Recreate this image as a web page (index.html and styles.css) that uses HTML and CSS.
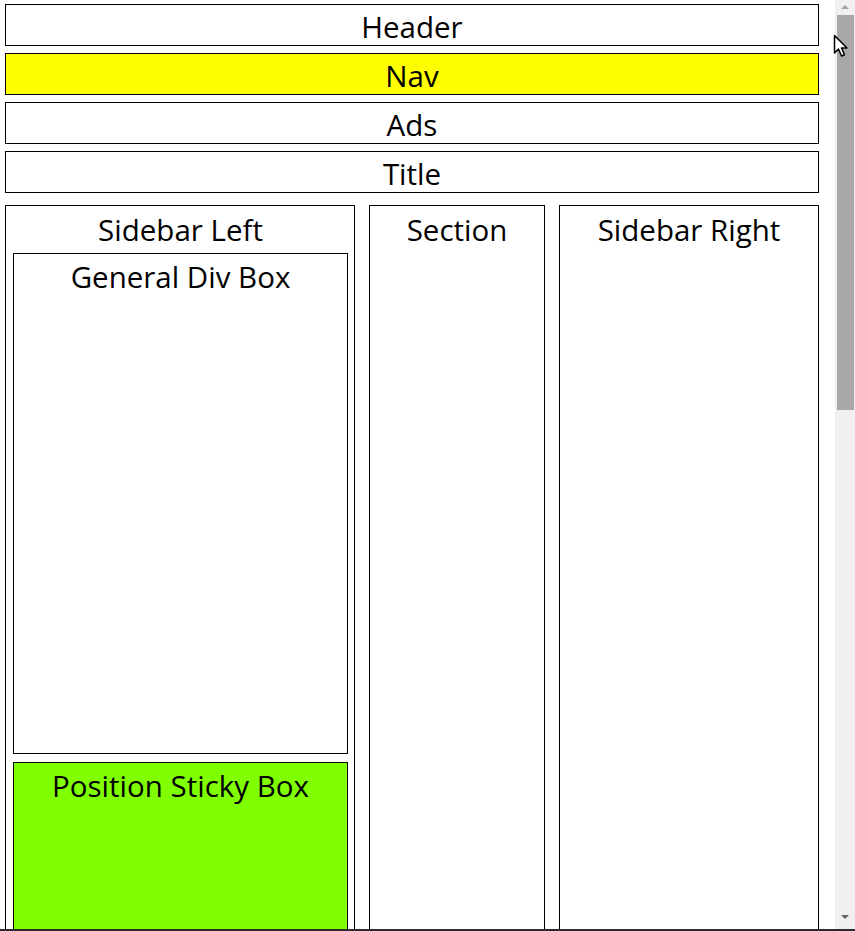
FILE: index.html
```html
<!DOCTYPE html>
<html lang="en">
<head>
    <meta charset="UTF-8">
    <meta name="viewport" content="width=device-width, initial-scale=1.0">
    <title>Position Sticky</title>
    <link rel="stylesheet" href="styles.css">
</head>
<body>
    <div class="window">
        <div class="page">
            <header class="box">Header</header>
            <nav class="box nav">Nav</nav>
            <div class="box">Ads</div>
            <div class="box">Title</div>

            <div class="main">
                <aside class="col sidebar-left">
                    <div class="label">Sidebar Left</div>
                    <div class="general">General Div Box</div>
                    <div class="sticky">Position Sticky Box</div>
                </aside>
                <section class="col">
                    <div class="label">Section</div>
                </section>
                <aside class="col">
                    <div class="label">Sidebar Right</div>
                </aside>
            </div>
        </div>

        <!-- browser scrollbar -->
        <div class="scrollbar">
            <span class="arrow up"></span>
            <div class="thumb"></div>
            <span class="arrow down"></span>
        </div>

        <svg class="cursor" width="16" height="24" viewBox="0 0 16 24">
            <path d="M1.5 1.5 L1.5 19 L5.5 15 L8.5 22 L11.5 20.8 L8.5 14 L14 14 Z" fill="#fff" stroke="#000" stroke-width="1.5" stroke-linejoin="round"/>
        </svg>
    </div>
    <div class="taskbar"></div>
</body>
</html>
```
FILE: styles.css
```css
html, body {
    margin: 0;
    padding: 0;
}

body {
    height: 931px;
    overflow: hidden;
    display: flex;
    flex-direction: column;
    background: white;
    font-family: "Open Sans", "Noto Sans", sans-serif;
    color: black;
}

.window {
    position: relative;
    flex: 1;
    display: flex;
    overflow: hidden;
}

.page {
    flex: 1;
    padding: 4px 16px 0 5px;
    overflow: hidden;
}

.box {
    border: 1px solid black;
    height: 42px;
    box-sizing: border-box;
    margin-bottom: 7px;
    text-align: center;
    font-size: 29.5px;
    line-height: 44px;
}

.nav {
    background: yellow;
}

.main {
    display: grid;
    grid-template-columns: 350px 176px 1fr;
    column-gap: 14px;
    margin-top: 12px;
}

.col {
    border: 1px solid black;
    height: 1000px;
    text-align: center;
    font-size: 29.5px;
}

.label {
    line-height: 47px;
}

.sidebar-left {
    padding: 0 6px 0 7px;
}

.general,
.sticky {
    border: 1px solid black;
    box-sizing: border-box;
    line-height: 46px;
}

.general {
    height: 501px;
    margin-bottom: 8px;
}

.sticky {
    height: 300px;
    background: #7fff00;
}

.scrollbar {
    width: 20px;
    background: #f0f0f0;
    display: flex;
    flex-direction: column;
    align-items: center;
}

.arrow {
    width: 0;
    height: 0;
    border-left: 4px solid transparent;
    border-right: 4px solid transparent;
}

.arrow.up {
    border-bottom: 4px solid #a3a3a3;
    margin: 5px 0 6px;
}

.arrow.down {
    border-top: 4px solid #606060;
    margin-top: auto;
    margin-bottom: 10px;
}

.thumb {
    width: 17px;
    height: 395px;
    background: #a8a8a8;
    margin-left: 1px;
}

.cursor {
    position: absolute;
    left: 833px;
    top: 34px;
}

.taskbar {
    height: 2px;
    background: #2b2b2b;
}
```
